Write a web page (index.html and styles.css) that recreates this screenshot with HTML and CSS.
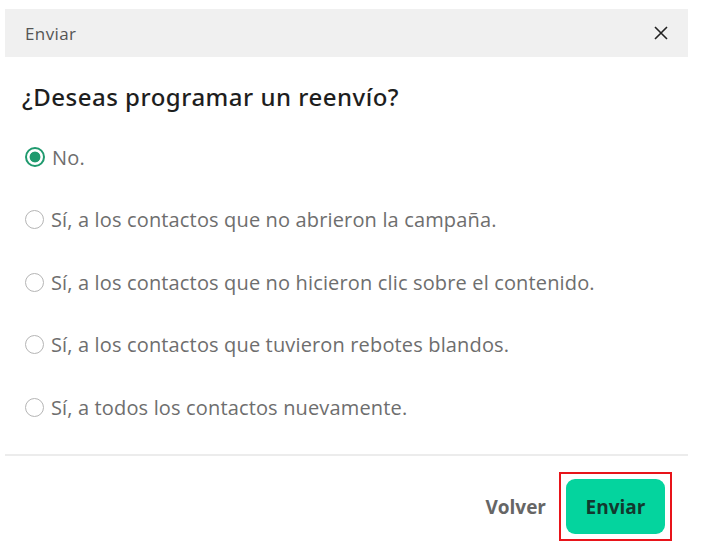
FILE: index.html
```html
<!DOCTYPE html>
<html lang="es">
<head>
  <meta charset="UTF-8">
  <meta name="viewport" content="width=device-width, initial-scale=1.0">
  <title>Enviar</title>
  <link rel="stylesheet" href="styles.css">
</head>
<body>
  <div class="modal">
    <div class="modal-header">
      <span class="modal-title">Enviar</span>
      <button class="close" aria-label="Cerrar">
        <svg width="14" height="14" viewBox="0 0 14 14"><path d="M1 1L13 13M13 1L1 13" stroke="#222" stroke-width="1.6" fill="none"/></svg>
      </button>
    </div>

    <div class="modal-body">
      <h2>¿Deseas programar un reenvío?</h2>

      <label class="option">
        <input type="radio" name="resend" checked>
        <span class="radio"></span>
        No.
      </label>
      <label class="option">
        <input type="radio" name="resend">
        <span class="radio"></span>
        Sí, a los contactos que no abrieron la campaña.
      </label>
      <label class="option">
        <input type="radio" name="resend">
        <span class="radio"></span>
        Sí, a los contactos que no hicieron clic sobre el contenido.
      </label>
      <label class="option">
        <input type="radio" name="resend">
        <span class="radio"></span>
        Sí, a los contactos que tuvieron rebotes blandos.
      </label>
      <label class="option">
        <input type="radio" name="resend">
        <span class="radio"></span>
        Sí, a todos los contactos nuevamente.
      </label>
    </div>

    <div class="modal-footer">
      <button class="btn-link">Volver</button>
      <div class="highlight">
        <button class="btn-primary">Enviar</button>
      </div>
    </div>
  </div>
</body>
</html>
```

FILE: styles.css
```css
body {
  margin: 0;
  background: #fff;
  font-family: 'Open Sans', sans-serif;
}
.modal {
  width: 683px;
  margin: 9px 0 0 5px;
}
.modal-header {
  background: #f0f0f0;
  height: 48px;
  display: flex;
  align-items: center;
  justify-content: space-between;
  padding: 0 20px 0 20px;
}
.modal-title {
  font-size: 17px;
  color: #555;
  letter-spacing: 0.4px;
}
.close {
  background: none;
  border: none;
  padding: 0;
  display: flex;
  cursor: pointer;
}
.modal-body {
  padding: 23px 0 33px 17px;
}
h2 {
  margin: 0 0 30px;
  font-family: 'Noto Sans', sans-serif;
  font-size: 24px;
  font-weight: 500;
  color: #1e1e1e;
  letter-spacing: 0.5px;
}
.option {
  display: flex;
  align-items: center;
  gap: 7px;
  height: 28px;
  margin-bottom: 34.5px;
  padding-left: 3px;
  font-size: 20px;
  letter-spacing: 0.15px;
  color: #6e6e6e;
  cursor: pointer;
}
.option:last-child {
  margin-bottom: 0;
}
.option input {
  display: none;
}
.radio {
  width: 17px;
  height: 17px;
  border: 1.5px solid #b5b5b5;
  border-radius: 50%;
  box-sizing: content-box;
  flex-shrink: 0;
}
.option input:checked + .radio {
  border: 2px solid #1f9a6e;
  width: 16px;
  height: 16px;
  background: radial-gradient(circle, #1f9a6e 0 5px, #fff 5.8px);
}
.modal-footer {
  border-top: 2px solid #ececec;
  display: flex;
  justify-content: flex-end;
  align-items: center;
  gap: 13px;
  padding: 16px 16px 0 0;
}
.btn-link {
  background: none;
  border: none;
  font-family: 'Open Sans', sans-serif;
  font-size: 19px;
  font-weight: 700;
  color: #666;
  padding: 0;
  cursor: pointer;
}
.highlight {
  border: 2px solid #e8141a;
  padding: 5px;
}
.btn-primary {
  display: block;
  background: #04d49e;
  border: none;
  border-radius: 9px;
  width: 99px;
  height: 55px;
  font-family: 'Open Sans', sans-serif;
  font-size: 19px;
  font-weight: 700;
  color: #12392e;
  cursor: pointer;
}
```
